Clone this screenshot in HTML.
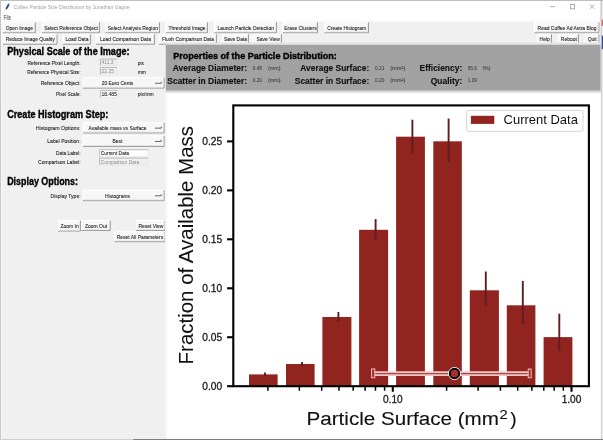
<!DOCTYPE html><html><head><meta charset="utf-8"><style>html,body{margin:0;padding:0;background:#fff;overflow:hidden}svg{display:block;will-change:transform}text{font-family:"Liberation Sans",sans-serif}</style></head><body>
<svg width="603" height="440" viewBox="0 0 603 440">
<rect x="0" y="0" width="603" height="440" fill="#ffffff"/>
<rect x="601" y="0" width="2" height="440" fill="#d8d8d8"/>
<rect x="601.5" y="0" width="1.5" height="440" fill="#eeeeee"/>
<rect x="601.6" y="19.7" width="1.4" height="6.2" fill="#d06060"/>
<rect x="601.6" y="35.6" width="1.4" height="13.6" fill="#3c4c8c"/>
<rect x="0" y="0" width="603" height="1" fill="#bdbdbd"/>
<rect x="0" y="0" width="1" height="440" fill="#c6c6c6"/>
<rect x="600.5" y="0" width="1" height="440" fill="#bdbdbd"/>
<rect x="0" y="439" width="133.2" height="1" fill="#d0d0d0"/>
<rect x="133.2" y="439" width="470" height="1" fill="#7e7e7e"/>
<path d="M5.6 10.2 C5.6 7.4 7.2 4.2 9.4 3.2 C9.6 5.6 8.2 8.6 5.6 10.2Z" fill="#2b4a86"/>
<text x="13.40" y="9.00" font-size="6.2" fill="#a0a0a0" stroke="#a0a0a0" stroke-width="0" text-anchor="start" textLength="116.40" lengthAdjust="spacingAndGlyphs">Coffee Particle Size Distribution by Jonathan Gagne</text>
<path d="M550.3 6.6 H555" stroke="#9a9a9a" stroke-width="0.8"/>
<rect x="570.4" y="4.6" width="4.2" height="4.2" fill="none" stroke="#9a9a9a" stroke-width="0.8"/>
<path d="M590 4.4 L594.3 8.8 M594.3 4.4 L590 8.8" stroke="#9a9a9a" stroke-width="0.8"/>
<text x="3.50" y="19.60" font-size="6.4" fill="#444444" stroke="#444444" stroke-width="0.04" text-anchor="start" textLength="7.60" lengthAdjust="spacingAndGlyphs">File</text>
<rect x="1" y="21.5" width="599.5" height="417.5" fill="#f0f0f0"/>
<rect x="1" y="21.5" width="1" height="417.5" fill="#f8f8f8"/>
<rect x="3" y="22.4" width="32.80" height="10.80" fill="#f7f7f7"/>
<path d="M3 33.2 V22.4 H35.8" stroke="#ffffff" stroke-width="1" fill="none"/>
<path d="M3 32.7 H35.3 V22.4" stroke="#8a8a8a" stroke-width="0.9" fill="none"/>
<path d="M4 31.900000000000002 H34.5 V23.4" stroke="#dcdcdc" stroke-width="0.7" fill="none"/>
<text x="19.40" y="29.60" font-size="6.2" fill="#222222" stroke="#222222" stroke-width="0.1" text-anchor="middle" textLength="27.24" lengthAdjust="spacingAndGlyphs">Open Image</text>
<rect x="42" y="22.4" width="58.00" height="10.80" fill="#f7f7f7"/>
<path d="M42 33.2 V22.4 H100" stroke="#ffffff" stroke-width="1" fill="none"/>
<path d="M42 32.7 H99.5 V22.4" stroke="#8a8a8a" stroke-width="0.9" fill="none"/>
<path d="M43 31.900000000000002 H98.7 V23.4" stroke="#dcdcdc" stroke-width="0.7" fill="none"/>
<text x="71.00" y="29.60" font-size="6.2" fill="#222222" stroke="#222222" stroke-width="0.1" text-anchor="middle" textLength="53.65" lengthAdjust="spacingAndGlyphs">Select Reference Object</text>
<rect x="105.6" y="22.4" width="54.40" height="10.80" fill="#f7f7f7"/>
<path d="M105.6 33.2 V22.4 H160" stroke="#ffffff" stroke-width="1" fill="none"/>
<path d="M105.6 32.7 H159.5 V22.4" stroke="#8a8a8a" stroke-width="0.9" fill="none"/>
<path d="M106.6 31.900000000000002 H158.7 V23.4" stroke="#dcdcdc" stroke-width="0.7" fill="none"/>
<text x="132.80" y="29.60" font-size="6.2" fill="#222222" stroke="#222222" stroke-width="0.1" text-anchor="middle" textLength="50.35" lengthAdjust="spacingAndGlyphs">Select Analysis Region</text>
<rect x="166" y="22.4" width="42.00" height="10.80" fill="#f7f7f7"/>
<path d="M166 33.2 V22.4 H208" stroke="#ffffff" stroke-width="1" fill="none"/>
<path d="M166 32.7 H207.5 V22.4" stroke="#8a8a8a" stroke-width="0.9" fill="none"/>
<path d="M167 31.900000000000002 H206.7 V23.4" stroke="#dcdcdc" stroke-width="0.7" fill="none"/>
<text x="187.00" y="29.60" font-size="6.2" fill="#222222" stroke="#222222" stroke-width="0.1" text-anchor="middle" textLength="37.14" lengthAdjust="spacingAndGlyphs">Threshold Image</text>
<rect x="214.4" y="22.4" width="62.60" height="10.80" fill="#f7f7f7"/>
<path d="M214.4 33.2 V22.4 H277" stroke="#ffffff" stroke-width="1" fill="none"/>
<path d="M214.4 32.7 H276.5 V22.4" stroke="#8a8a8a" stroke-width="0.9" fill="none"/>
<path d="M215.4 31.900000000000002 H275.7 V23.4" stroke="#dcdcdc" stroke-width="0.7" fill="none"/>
<text x="245.70" y="29.60" font-size="6.2" fill="#222222" stroke="#222222" stroke-width="0.1" text-anchor="middle" textLength="56.40" lengthAdjust="spacingAndGlyphs">Launch Particle Detection</text>
<rect x="283" y="22.4" width="35.00" height="10.80" fill="#f7f7f7"/>
<path d="M283 33.2 V22.4 H318" stroke="#ffffff" stroke-width="1" fill="none"/>
<path d="M283 32.7 H317.5 V22.4" stroke="#8a8a8a" stroke-width="0.9" fill="none"/>
<path d="M284 31.900000000000002 H316.7 V23.4" stroke="#dcdcdc" stroke-width="0.7" fill="none"/>
<text x="300.50" y="29.60" font-size="6.2" fill="#222222" stroke="#222222" stroke-width="0.1" text-anchor="middle" textLength="32.46" lengthAdjust="spacingAndGlyphs">Erase Clusters</text>
<rect x="324.4" y="22.4" width="44.60" height="10.80" fill="#f7f7f7"/>
<path d="M324.4 33.2 V22.4 H369" stroke="#ffffff" stroke-width="1" fill="none"/>
<path d="M324.4 32.7 H368.5 V22.4" stroke="#8a8a8a" stroke-width="0.9" fill="none"/>
<path d="M325.4 31.900000000000002 H367.7 V23.4" stroke="#dcdcdc" stroke-width="0.7" fill="none"/>
<text x="346.70" y="29.60" font-size="6.2" fill="#222222" stroke="#222222" stroke-width="0.1" text-anchor="middle" textLength="38.79" lengthAdjust="spacingAndGlyphs">Create Histogram</text>
<rect x="534.6" y="22.4" width="64.80" height="10.80" fill="#f7f7f7"/>
<path d="M534.6 33.2 V22.4 H599.4" stroke="#ffffff" stroke-width="1" fill="none"/>
<path d="M534.6 32.7 H598.9 V22.4" stroke="#8a8a8a" stroke-width="0.9" fill="none"/>
<path d="M535.6 31.900000000000002 H598.1 V23.4" stroke="#dcdcdc" stroke-width="0.7" fill="none"/>
<text x="567.00" y="29.60" font-size="6.2" fill="#222222" stroke="#222222" stroke-width="0.1" text-anchor="middle" textLength="58.80" lengthAdjust="spacingAndGlyphs">Read Coffee Ad Astra Blog</text>
<rect x="3" y="34.3" width="54.50" height="10.40" fill="#f7f7f7"/>
<path d="M3 44.7 V34.3 H57.5" stroke="#ffffff" stroke-width="1" fill="none"/>
<path d="M3 44.2 H57.0 V34.3" stroke="#8a8a8a" stroke-width="0.9" fill="none"/>
<path d="M4 43.400000000000006 H56.2 V35.3" stroke="#dcdcdc" stroke-width="0.7" fill="none"/>
<text x="30.25" y="40.90" font-size="6.2" fill="#222222" stroke="#222222" stroke-width="0.1" text-anchor="middle" textLength="48.97" lengthAdjust="spacingAndGlyphs">Reduce Image Quality</text>
<rect x="63" y="34.3" width="28.00" height="10.40" fill="#f7f7f7"/>
<path d="M63 44.7 V34.3 H91" stroke="#ffffff" stroke-width="1" fill="none"/>
<path d="M63 44.2 H90.5 V34.3" stroke="#8a8a8a" stroke-width="0.9" fill="none"/>
<path d="M64 43.400000000000006 H89.7 V35.3" stroke="#dcdcdc" stroke-width="0.7" fill="none"/>
<text x="77.00" y="40.90" font-size="6.2" fill="#222222" stroke="#222222" stroke-width="0.1" text-anchor="middle" textLength="22.84" lengthAdjust="spacingAndGlyphs">Load Data</text>
<rect x="96" y="34.3" width="59.00" height="10.40" fill="#f7f7f7"/>
<path d="M96 44.7 V34.3 H155" stroke="#ffffff" stroke-width="1" fill="none"/>
<path d="M96 44.2 H154.5 V34.3" stroke="#8a8a8a" stroke-width="0.9" fill="none"/>
<path d="M97 43.400000000000006 H153.7 V35.3" stroke="#dcdcdc" stroke-width="0.7" fill="none"/>
<text x="125.50" y="40.90" font-size="6.2" fill="#222222" stroke="#222222" stroke-width="0.1" text-anchor="middle" textLength="50.90" lengthAdjust="spacingAndGlyphs">Load Comparison Data</text>
<rect x="159" y="34.3" width="58.00" height="10.40" fill="#f7f7f7"/>
<path d="M159 44.7 V34.3 H217" stroke="#ffffff" stroke-width="1" fill="none"/>
<path d="M159 44.2 H216.5 V34.3" stroke="#8a8a8a" stroke-width="0.9" fill="none"/>
<path d="M160 43.400000000000006 H215.7 V35.3" stroke="#dcdcdc" stroke-width="0.7" fill="none"/>
<text x="188.00" y="40.90" font-size="6.2" fill="#222222" stroke="#222222" stroke-width="0.1" text-anchor="middle" textLength="51.99" lengthAdjust="spacingAndGlyphs">Flush Comparison Data</text>
<rect x="222" y="34.3" width="27.00" height="10.40" fill="#f7f7f7"/>
<path d="M222 44.7 V34.3 H249" stroke="#ffffff" stroke-width="1" fill="none"/>
<path d="M222 44.2 H248.5 V34.3" stroke="#8a8a8a" stroke-width="0.9" fill="none"/>
<path d="M223 43.400000000000006 H247.7 V35.3" stroke="#dcdcdc" stroke-width="0.7" fill="none"/>
<text x="235.50" y="40.90" font-size="6.2" fill="#222222" stroke="#222222" stroke-width="0.1" text-anchor="middle" textLength="23.11" lengthAdjust="spacingAndGlyphs">Save Data</text>
<rect x="254.4" y="34.3" width="27.60" height="10.40" fill="#f7f7f7"/>
<path d="M254.4 44.7 V34.3 H282" stroke="#ffffff" stroke-width="1" fill="none"/>
<path d="M254.4 44.2 H281.5 V34.3" stroke="#8a8a8a" stroke-width="0.9" fill="none"/>
<path d="M255.4 43.400000000000006 H280.7 V35.3" stroke="#dcdcdc" stroke-width="0.7" fill="none"/>
<text x="268.20" y="40.90" font-size="6.2" fill="#222222" stroke="#222222" stroke-width="0.1" text-anchor="middle" textLength="23.30" lengthAdjust="spacingAndGlyphs">Save View</text>
<rect x="537.4" y="34.3" width="14.60" height="10.40" fill="#f7f7f7"/>
<path d="M537.4 44.7 V34.3 H552" stroke="#ffffff" stroke-width="1" fill="none"/>
<path d="M537.4 44.2 H551.5 V34.3" stroke="#8a8a8a" stroke-width="0.9" fill="none"/>
<path d="M538.4 43.400000000000006 H550.7 V35.3" stroke="#dcdcdc" stroke-width="0.7" fill="none"/>
<text x="544.70" y="40.90" font-size="6.2" fill="#222222" stroke="#222222" stroke-width="0.1" text-anchor="middle" textLength="10.18" lengthAdjust="spacingAndGlyphs">Help</text>
<rect x="558.6" y="34.3" width="20.40" height="10.40" fill="#f7f7f7"/>
<path d="M558.6 44.7 V34.3 H579" stroke="#ffffff" stroke-width="1" fill="none"/>
<path d="M558.6 44.2 H578.5 V34.3" stroke="#8a8a8a" stroke-width="0.9" fill="none"/>
<path d="M559.6 43.400000000000006 H577.7 V35.3" stroke="#dcdcdc" stroke-width="0.7" fill="none"/>
<text x="568.80" y="40.90" font-size="6.2" fill="#222222" stroke="#222222" stroke-width="0.1" text-anchor="middle" textLength="15.96" lengthAdjust="spacingAndGlyphs">Reboot</text>
<rect x="585" y="34.3" width="14.40" height="10.40" fill="#f7f7f7"/>
<path d="M585 44.7 V34.3 H599.4" stroke="#ffffff" stroke-width="1" fill="none"/>
<path d="M585 44.2 H598.9 V34.3" stroke="#8a8a8a" stroke-width="0.9" fill="none"/>
<path d="M586 43.400000000000006 H598.1 V35.3" stroke="#dcdcdc" stroke-width="0.7" fill="none"/>
<text x="592.20" y="40.90" font-size="6.2" fill="#222222" stroke="#222222" stroke-width="0.1" text-anchor="middle" textLength="9.08" lengthAdjust="spacingAndGlyphs">Quit</text>
<rect x="249.8" y="34.3" width="4.6" height="9.6" fill="#f7f7f7"/>
<text x="7.20" y="54.50" font-size="10.2" font-weight="bold" fill="#000" stroke="#000" stroke-width="0.35" textLength="122.40" lengthAdjust="spacingAndGlyphs">Physical Scale of the Image:</text>
<text x="7.20" y="117.70" font-size="10.2" font-weight="bold" fill="#000" stroke="#000" stroke-width="0.35" textLength="101.13" lengthAdjust="spacingAndGlyphs">Create Histogram Step:</text>
<text x="7.20" y="185.00" font-size="10.2" font-weight="bold" fill="#000" stroke="#000" stroke-width="0.35" textLength="70.80" lengthAdjust="spacingAndGlyphs">Display Options:</text>
<text x="80.60" y="64.70" font-size="6.2" fill="#222222" stroke="#222222" stroke-width="0.1" text-anchor="end" textLength="53.10" lengthAdjust="spacingAndGlyphs">Reference Pixel Length:</text>
<text x="80.60" y="73.70" font-size="6.2" fill="#222222" stroke="#222222" stroke-width="0.1" text-anchor="end" textLength="53.40" lengthAdjust="spacingAndGlyphs">Reference Physical Size:</text>
<text x="80.60" y="85.00" font-size="6.2" fill="#222222" stroke="#222222" stroke-width="0.1" text-anchor="end" textLength="39.90" lengthAdjust="spacingAndGlyphs">Reference Object:</text>
<text x="80.60" y="96.10" font-size="6.2" fill="#222222" stroke="#222222" stroke-width="0.1" text-anchor="end" textLength="24.60" lengthAdjust="spacingAndGlyphs">Pixel Scale:</text>
<text x="80.60" y="129.90" font-size="6.2" fill="#222222" stroke="#222222" stroke-width="0.1" text-anchor="end" textLength="44.90" lengthAdjust="spacingAndGlyphs">Histogram Options:</text>
<text x="80.60" y="143.20" font-size="6.2" fill="#222222" stroke="#222222" stroke-width="0.1" text-anchor="end" textLength="33.30" lengthAdjust="spacingAndGlyphs">Label Position:</text>
<text x="80.60" y="154.80" font-size="6.2" fill="#222222" stroke="#222222" stroke-width="0.1" text-anchor="end" textLength="24.60" lengthAdjust="spacingAndGlyphs">Data Label:</text>
<text x="80.60" y="163.90" font-size="6.2" fill="#222222" stroke="#222222" stroke-width="0.1" text-anchor="end" textLength="42.60" lengthAdjust="spacingAndGlyphs">Comparison Label:</text>
<text x="80.60" y="197.70" font-size="6.2" fill="#222222" stroke="#222222" stroke-width="0.1" text-anchor="end" textLength="30.00" lengthAdjust="spacingAndGlyphs">Display Type:</text>
<rect x="100" y="58.6" width="17.00" height="7.00" fill="#f0f0f0"/>
<path d="M100.4 65.6 V59.0 H117" stroke="#a8a8a8" stroke-width="0.8" fill="none"/>
<path d="M100.8 65.19999999999999 H116.6 V59.4" stroke="#e2e2e2" stroke-width="0.8" fill="none"/>
<text x="101.50" y="64.10" font-size="6.2" fill="#8a8a8a" stroke="#8a8a8a" stroke-width="0" text-anchor="start" textLength="12.02" lengthAdjust="spacingAndGlyphs">411.3</text>
<rect x="100" y="67.2" width="17.00" height="7.20" fill="#f0f0f0"/>
<path d="M100.4 74.4 V67.60000000000001 H117" stroke="#a8a8a8" stroke-width="0.8" fill="none"/>
<path d="M100.8 74.0 H116.6 V68.0" stroke="#e2e2e2" stroke-width="0.8" fill="none"/>
<text x="101.50" y="72.90" font-size="6.2" fill="#8a8a8a" stroke="#8a8a8a" stroke-width="0" text-anchor="start" textLength="12.39" lengthAdjust="spacingAndGlyphs">22.25</text>
<rect x="100" y="90.2" width="17.50" height="7.60" fill="#ffffff"/>
<path d="M100.4 97.8 V90.60000000000001 H117.5" stroke="#a8a8a8" stroke-width="0.8" fill="none"/>
<path d="M100.8 97.39999999999999 H117.1 V91.0" stroke="#e2e2e2" stroke-width="0.8" fill="none"/>
<text x="101.50" y="96.30" font-size="6.2" fill="#222222" stroke="#222222" stroke-width="0.1" text-anchor="start" textLength="15.14" lengthAdjust="spacingAndGlyphs">18.485</text>
<rect x="99.2" y="149.3" width="49.00" height="7.50" fill="#ffffff"/>
<path d="M99.60000000000001 156.8 V149.70000000000002 H148.2" stroke="#a8a8a8" stroke-width="0.8" fill="none"/>
<path d="M100.0 156.4 H147.79999999999998 V150.10000000000002" stroke="#e2e2e2" stroke-width="0.8" fill="none"/>
<text x="100.70" y="155.30" font-size="6.2" fill="#222222" stroke="#222222" stroke-width="0.1" text-anchor="start" textLength="28.33" lengthAdjust="spacingAndGlyphs">Current Data</text>
<rect x="99.2" y="157.7" width="49.00" height="7.50" fill="#f0f0f0"/>
<path d="M99.60000000000001 165.2 V158.1 H148.2" stroke="#a8a8a8" stroke-width="0.8" fill="none"/>
<path d="M100.0 164.79999999999998 H147.79999999999998 V158.5" stroke="#e2e2e2" stroke-width="0.8" fill="none"/>
<text x="100.70" y="163.70" font-size="6.2" fill="#8a8a8a" stroke="#8a8a8a" stroke-width="0" text-anchor="start" textLength="38.51" lengthAdjust="spacingAndGlyphs">Comparison Data</text>
<text x="137.70" y="64.60" font-size="6.2" fill="#222222" stroke="#222222" stroke-width="0.1" text-anchor="start" textLength="6.33" lengthAdjust="spacingAndGlyphs">pix</text>
<text x="137.70" y="73.60" font-size="6.2" fill="#222222" stroke="#222222" stroke-width="0.1" text-anchor="start" textLength="8.25" lengthAdjust="spacingAndGlyphs">mm</text>
<text x="137.70" y="96.00" font-size="6.2" fill="#222222" stroke="#222222" stroke-width="0.1" text-anchor="start" textLength="15.95" lengthAdjust="spacingAndGlyphs">pix/mm</text>
<rect x="83" y="77.7" width="81.60" height="10.90" fill="#f7f7f7"/>
<path d="M83 88.6 V77.7 H164.6" stroke="#ffffff" stroke-width="1" fill="none"/>
<path d="M83 88.1 H164.1 V77.7" stroke="#8a8a8a" stroke-width="0.9" fill="none"/>
<path d="M84 87.3 H163.29999999999998 V78.7" stroke="#dcdcdc" stroke-width="0.7" fill="none"/>
<text x="123.80" y="84.95" font-size="6.2" fill="#222222" stroke="#222222" stroke-width="0.1" text-anchor="middle" textLength="0.00" lengthAdjust="spacingAndGlyphs"></text>
<text x="117.50" y="85.25" font-size="6.2" fill="#222222" stroke="#222222" stroke-width="0.1" text-anchor="middle" textLength="31.64" lengthAdjust="spacingAndGlyphs">20 Euro Cents</text>
<path d="M155.0 83.25 H161.2 V81.65" stroke="#555" stroke-width="0.9" fill="none"/>
<rect x="83" y="122.7" width="81.60" height="10.70" fill="#f7f7f7"/>
<path d="M83 133.4 V122.7 H164.6" stroke="#ffffff" stroke-width="1" fill="none"/>
<path d="M83 132.9 H164.1 V122.7" stroke="#8a8a8a" stroke-width="0.9" fill="none"/>
<path d="M84 132.1 H163.29999999999998 V123.7" stroke="#dcdcdc" stroke-width="0.7" fill="none"/>
<text x="123.80" y="129.85" font-size="6.2" fill="#222222" stroke="#222222" stroke-width="0.1" text-anchor="middle" textLength="0.00" lengthAdjust="spacingAndGlyphs"></text>
<text x="117.50" y="130.15" font-size="6.2" fill="#222222" stroke="#222222" stroke-width="0.1" text-anchor="middle" textLength="57.96" lengthAdjust="spacingAndGlyphs">Available mass vs Surface</text>
<path d="M155.0 128.15 H161.2 V126.55000000000001" stroke="#555" stroke-width="0.9" fill="none"/>
<rect x="83" y="135.8" width="81.60" height="11.10" fill="#f7f7f7"/>
<path d="M83 146.9 V135.8 H164.6" stroke="#ffffff" stroke-width="1" fill="none"/>
<path d="M83 146.4 H164.1 V135.8" stroke="#8a8a8a" stroke-width="0.9" fill="none"/>
<path d="M84 145.6 H163.29999999999998 V136.8" stroke="#dcdcdc" stroke-width="0.7" fill="none"/>
<text x="123.80" y="143.15" font-size="6.2" fill="#222222" stroke="#222222" stroke-width="0.1" text-anchor="middle" textLength="0.00" lengthAdjust="spacingAndGlyphs"></text>
<text x="117.50" y="143.45" font-size="6.2" fill="#222222" stroke="#222222" stroke-width="0.1" text-anchor="middle" textLength="9.90" lengthAdjust="spacingAndGlyphs">Best</text>
<path d="M155.0 141.45000000000002 H161.2 V139.85000000000002" stroke="#555" stroke-width="0.9" fill="none"/>
<rect x="83" y="190.2" width="81.60" height="11.00" fill="#f7f7f7"/>
<path d="M83 201.2 V190.2 H164.6" stroke="#ffffff" stroke-width="1" fill="none"/>
<path d="M83 200.7 H164.1 V190.2" stroke="#8a8a8a" stroke-width="0.9" fill="none"/>
<path d="M84 199.89999999999998 H163.29999999999998 V191.2" stroke="#dcdcdc" stroke-width="0.7" fill="none"/>
<text x="123.80" y="197.50" font-size="6.2" fill="#222222" stroke="#222222" stroke-width="0.1" text-anchor="middle" textLength="0.00" lengthAdjust="spacingAndGlyphs"></text>
<text x="117.50" y="197.80" font-size="6.2" fill="#222222" stroke="#222222" stroke-width="0.1" text-anchor="middle" textLength="25.03" lengthAdjust="spacingAndGlyphs">Histograms</text>
<path d="M155.0 195.79999999999998 H161.2 V194.2" stroke="#555" stroke-width="0.9" fill="none"/>
<rect x="58.2" y="220.7" width="22.80" height="10.80" fill="#f7f7f7"/>
<path d="M58.2 231.5 V220.7 H81" stroke="#ffffff" stroke-width="1" fill="none"/>
<path d="M58.2 231.0 H80.5 V220.7" stroke="#8a8a8a" stroke-width="0.9" fill="none"/>
<path d="M59.2 230.2 H79.7 V221.7" stroke="#dcdcdc" stroke-width="0.7" fill="none"/>
<text x="69.60" y="227.90" font-size="6.2" fill="#222222" stroke="#222222" stroke-width="0.1" text-anchor="middle" textLength="18.15" lengthAdjust="spacingAndGlyphs">Zoom In</text>
<rect x="81.5" y="220.5" width="29.20" height="10.50" fill="#f7f7f7"/>
<path d="M81.5 231 V220.5 H110.7" stroke="#ffffff" stroke-width="1" fill="none"/>
<path d="M81.5 230.5 H110.2 V220.5" stroke="#8a8a8a" stroke-width="0.9" fill="none"/>
<path d="M82.5 229.7 H109.4 V221.5" stroke="#dcdcdc" stroke-width="0.7" fill="none"/>
<text x="96.10" y="227.55" font-size="6.2" fill="#222222" stroke="#222222" stroke-width="0.1" text-anchor="middle" textLength="22.01" lengthAdjust="spacingAndGlyphs">Zoom Out</text>
<rect x="136.2" y="220.5" width="29.30" height="10.50" fill="#f7f7f7"/>
<path d="M136.2 231 V220.5 H165.5" stroke="#ffffff" stroke-width="1" fill="none"/>
<path d="M136.2 230.5 H165.0 V220.5" stroke="#8a8a8a" stroke-width="0.9" fill="none"/>
<path d="M137.2 229.7 H164.2 V221.5" stroke="#dcdcdc" stroke-width="0.7" fill="none"/>
<text x="150.85" y="227.55" font-size="6.2" fill="#222222" stroke="#222222" stroke-width="0.1" text-anchor="middle" textLength="24.94" lengthAdjust="spacingAndGlyphs">Reset View</text>
<rect x="114.5" y="231.7" width="51.00" height="10.50" fill="#f7f7f7"/>
<path d="M114.5 242.2 V231.7 H165.5" stroke="#ffffff" stroke-width="1" fill="none"/>
<path d="M114.5 241.7 H165.0 V231.7" stroke="#8a8a8a" stroke-width="0.9" fill="none"/>
<path d="M115.5 240.89999999999998 H164.2 V232.7" stroke="#dcdcdc" stroke-width="0.7" fill="none"/>
<text x="140.00" y="238.75" font-size="6.2" fill="#222222" stroke="#222222" stroke-width="0.1" text-anchor="middle" textLength="46.49" lengthAdjust="spacingAndGlyphs">Reset All Parameters</text>
<rect x="165.8" y="42.5" width="434.7" height="2.3" fill="#e4e4e4"/>
<rect x="165.8" y="44.8" width="434.7" height="45.95" fill="#a2a2a2"/>
<rect x="165.8" y="90.75" width="434.7" height="2.0" fill="#d8d8d8"/>
<text x="173.20" y="58.80" font-size="9.2" font-weight="bold" fill="#000" stroke="#000" stroke-width="0.35" textLength="163.60" lengthAdjust="spacingAndGlyphs">Properties of the Particle Distribution:</text>
<text x="247.00" y="71.40" font-size="8.4" font-weight="bold" fill="#111" stroke="#111" stroke-width="0.12" text-anchor="end" textLength="74.18" lengthAdjust="spacingAndGlyphs">Average Diameter:</text>
<text x="247.00" y="83.80" font-size="8.4" font-weight="bold" fill="#111" stroke="#111" stroke-width="0.12" text-anchor="end" textLength="79.64" lengthAdjust="spacingAndGlyphs">Scatter in Diameter:</text>
<text x="369.30" y="71.40" font-size="8.4" font-weight="bold" fill="#111" stroke="#111" stroke-width="0.12" text-anchor="end" textLength="69.03" lengthAdjust="spacingAndGlyphs">Average Surface:</text>
<text x="369.30" y="83.80" font-size="8.4" font-weight="bold" fill="#111" stroke="#111" stroke-width="0.12" text-anchor="end" textLength="74.49" lengthAdjust="spacingAndGlyphs">Scatter in Surface:</text>
<text x="462.20" y="71.40" font-size="8.4" font-weight="bold" fill="#111" stroke="#111" stroke-width="0.12" text-anchor="end" textLength="42.63" lengthAdjust="spacingAndGlyphs">Efficiency:</text>
<text x="462.20" y="83.80" font-size="8.4" font-weight="bold" fill="#111" stroke="#111" stroke-width="0.12" text-anchor="end" textLength="31.38" lengthAdjust="spacingAndGlyphs">Quality:</text>
<text x="252.80" y="69.90" font-size="5.3" fill="#3a3a3a" stroke="#3a3a3a" stroke-width="0.05" textLength="9.20" lengthAdjust="spacingAndGlyphs">0.48</text>
<text x="267.90" y="69.90" font-size="5.3" fill="#3a3a3a" stroke="#3a3a3a" stroke-width="0.05" textLength="12.70" lengthAdjust="spacingAndGlyphs">(mm)</text>
<text x="252.80" y="81.80" font-size="5.3" fill="#3a3a3a" stroke="#3a3a3a" stroke-width="0.05" textLength="9.20" lengthAdjust="spacingAndGlyphs">0.20</text>
<text x="267.90" y="81.80" font-size="5.3" fill="#3a3a3a" stroke="#3a3a3a" stroke-width="0.05" textLength="12.70" lengthAdjust="spacingAndGlyphs">(mm)</text>
<text x="375.10" y="69.90" font-size="5.3" fill="#3a3a3a" stroke="#3a3a3a" stroke-width="0.05" textLength="9.30" lengthAdjust="spacingAndGlyphs">0.21</text>
<text x="390.20" y="69.90" font-size="5.3" fill="#3a3a3a" stroke="#3a3a3a" stroke-width="0.05" textLength="15.10" lengthAdjust="spacingAndGlyphs">(mm²)</text>
<text x="375.10" y="81.80" font-size="5.3" fill="#3a3a3a" stroke="#3a3a3a" stroke-width="0.05" textLength="9.30" lengthAdjust="spacingAndGlyphs">0.20</text>
<text x="390.20" y="81.80" font-size="5.3" fill="#3a3a3a" stroke="#3a3a3a" stroke-width="0.05" textLength="15.10" lengthAdjust="spacingAndGlyphs">(mm²)</text>
<text x="467.70" y="69.90" font-size="5.3" fill="#3a3a3a" stroke="#3a3a3a" stroke-width="0.05" textLength="9.30" lengthAdjust="spacingAndGlyphs">95.6</text>
<text x="482.40" y="69.90" font-size="5.3" fill="#3a3a3a" stroke="#3a3a3a" stroke-width="0.05" textLength="8.10" lengthAdjust="spacingAndGlyphs">(%)</text>
<text x="467.70" y="81.80" font-size="5.3" fill="#3a3a3a" stroke="#3a3a3a" stroke-width="0.05" textLength="9.30" lengthAdjust="spacingAndGlyphs">1.09</text>
<rect x="166.8" y="92.75" width="434" height="346.25" fill="#ffffff"/>
<rect x="165.0" y="92.75" width="1.8" height="346.25" fill="#f6f6f6"/>
<rect x="249" y="374.4" width="28.60" height="11.80" fill="#922420"/>
<rect x="286" y="364" width="28.60" height="22.20" fill="#922420"/>
<rect x="322.4" y="317" width="29.00" height="69.20" fill="#922420"/>
<rect x="359.1" y="229.8" width="29.00" height="156.40" fill="#922420"/>
<rect x="396.1" y="136.7" width="28.80" height="249.50" fill="#922420"/>
<rect x="433.3" y="141.3" width="28.50" height="244.90" fill="#922420"/>
<rect x="469.8" y="290.3" width="29.10" height="95.90" fill="#922420"/>
<rect x="506.8" y="305.3" width="28.60" height="80.90" fill="#922420"/>
<rect x="543.6" y="337.1" width="28.80" height="49.10" fill="#922420"/>
<path d="M265 372.6 V376" stroke="#5c1e1e" stroke-width="1.9"/>
<path d="M302 362 V366" stroke="#5c1e1e" stroke-width="1.9"/>
<path d="M338.4 312 V321.6" stroke="#5c1e1e" stroke-width="1.9"/>
<path d="M375.6 219.1 V239.4" stroke="#5c1e1e" stroke-width="1.9"/>
<path d="M412.4 119.7 V152.9" stroke="#5c1e1e" stroke-width="1.9"/>
<path d="M448.6 118.6 V162.2" stroke="#5c1e1e" stroke-width="1.9"/>
<path d="M485.8 271.5 V305.7" stroke="#5c1e1e" stroke-width="1.9"/>
<path d="M522.8 280.9 V324" stroke="#5c1e1e" stroke-width="1.9"/>
<path d="M559.3 313.7 V350.7" stroke="#5c1e1e" stroke-width="1.9"/>
<path d="M373 373.6 H529" stroke="#ebc6c6" stroke-width="4.6"/>
<path d="M373 373.6 H529" stroke="#b04444" stroke-width="1.4"/>
<rect x="371.6" y="368.9" width="3.2" height="8.9" fill="#a8302c" stroke="#f0c8c8" stroke-width="0.9"/>
<rect x="528.2" y="369.0" width="3.0" height="8.8" fill="#a8302c" stroke="#f0c8c8" stroke-width="0.9"/>
<circle cx="454.5" cy="373.5" r="6.4" fill="#ffffff"/>
<circle cx="454.5" cy="373.5" r="4.75" fill="#a8302c" stroke="#000" stroke-width="1.9"/>
<rect x="233.3" y="105.4" width="355.59999999999997" height="280.79999999999995" fill="none" stroke="#000" stroke-width="2.1"/>
<path d="M227.10000000000002 386.20 H233.3" stroke="#000" stroke-width="2.1"/>
<text x="222.2" y="389.50" font-size="10.6" fill="#1a1a1a" stroke="#1a1a1a" stroke-width="0.3" text-anchor="end" textLength="19.9" lengthAdjust="spacingAndGlyphs">0.00</text>
<path d="M227.10000000000002 337.24 H233.3" stroke="#000" stroke-width="2.1"/>
<text x="222.2" y="340.54" font-size="10.6" fill="#1a1a1a" stroke="#1a1a1a" stroke-width="0.3" text-anchor="end" textLength="19.9" lengthAdjust="spacingAndGlyphs">0.05</text>
<path d="M227.10000000000002 288.28 H233.3" stroke="#000" stroke-width="2.1"/>
<text x="222.2" y="291.58" font-size="10.6" fill="#1a1a1a" stroke="#1a1a1a" stroke-width="0.3" text-anchor="end" textLength="19.9" lengthAdjust="spacingAndGlyphs">0.10</text>
<path d="M227.10000000000002 239.32 H233.3" stroke="#000" stroke-width="2.1"/>
<text x="222.2" y="242.62" font-size="10.6" fill="#1a1a1a" stroke="#1a1a1a" stroke-width="0.3" text-anchor="end" textLength="19.9" lengthAdjust="spacingAndGlyphs">0.15</text>
<path d="M227.10000000000002 190.36 H233.3" stroke="#000" stroke-width="2.1"/>
<text x="222.2" y="193.66" font-size="10.6" fill="#1a1a1a" stroke="#1a1a1a" stroke-width="0.3" text-anchor="end" textLength="19.9" lengthAdjust="spacingAndGlyphs">0.20</text>
<path d="M227.10000000000002 141.40 H233.3" stroke="#000" stroke-width="2.1"/>
<text x="222.2" y="144.70" font-size="10.6" fill="#1a1a1a" stroke="#1a1a1a" stroke-width="0.3" text-anchor="end" textLength="19.9" lengthAdjust="spacingAndGlyphs">0.25</text>
<path d="M392.80 386.2 V391.8 M571.50 386.2 V391.8" stroke="#000" stroke-width="2.1"/>
<path d="M267.89 386.2 V390.8 M299.36 386.2 V390.8 M321.69 386.2 V390.8 M339.01 386.2 V390.8 M353.16 386.2 V390.8 M365.12 386.2 V390.8 M375.48 386.2 V390.8 M384.62 386.2 V390.8 M446.59 386.2 V390.8 M478.06 386.2 V390.8 M500.39 386.2 V390.8 M517.71 386.2 V390.8 M531.86 386.2 V390.8 M543.82 386.2 V390.8 M554.18 386.2 V390.8 M563.32 386.2 V390.8 " stroke="#000" stroke-width="1.5"/>
<text x="392.80" y="403.2" font-size="10.6" fill="#1a1a1a" stroke="#1a1a1a" stroke-width="0.3" text-anchor="middle" textLength="19.7" lengthAdjust="spacingAndGlyphs">0.10</text>
<text x="571.50" y="403.2" font-size="10.6" fill="#1a1a1a" stroke="#1a1a1a" stroke-width="0.3" text-anchor="middle" textLength="19.7" lengthAdjust="spacingAndGlyphs">1.00</text>
<text x="306.5" y="425.3" font-size="19.2" fill="#111" stroke="#111" stroke-width="0.12" textLength="192.4" lengthAdjust="spacingAndGlyphs">Particle Surface (mm</text>
<text x="499.6" y="418.6" font-size="12.8" fill="#111" stroke="#111" stroke-width="0.12" textLength="8.2" lengthAdjust="spacingAndGlyphs">2</text>
<text x="510.3" y="425.3" font-size="19.2" fill="#111" stroke="#111" stroke-width="0.12" textLength="6.4" lengthAdjust="spacingAndGlyphs">)</text>
<text transform="translate(192.9 364.4) rotate(-90)" x="0" y="0" font-size="19.4" fill="#111" stroke="#111" stroke-width="0.04" textLength="238.4" lengthAdjust="spacingAndGlyphs">Fraction of Available Mass</text>
<rect x="466.5" y="110.4" width="116.5" height="20.9" rx="2" fill="#fff" fill-opacity="0.8" stroke="#d0d0d0" stroke-width="0.9"/>
<rect x="470.9" y="115.8" width="23.4" height="8.1" fill="#922420"/>
<text x="503.6" y="124.4" font-size="13.6" fill="#111" textLength="74.3" lengthAdjust="spacingAndGlyphs">Current Data</text>
</svg></body></html>
